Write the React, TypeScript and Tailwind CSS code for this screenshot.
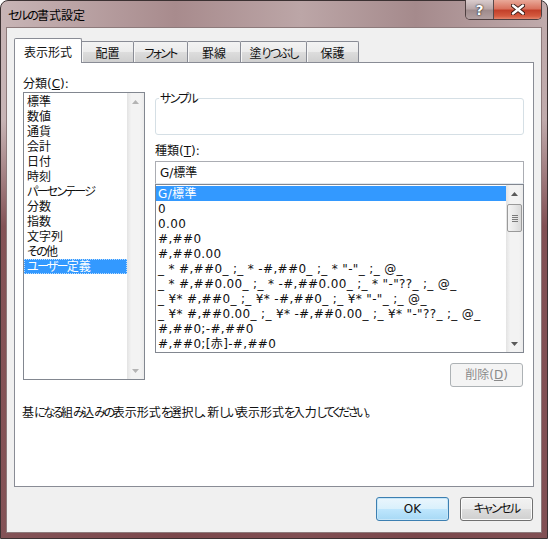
import React from "react";

function J({ t, tight }: { t: string; tight?: boolean }) {
  const parts = t.split(/([\u3040-\u30ff]+)/);
  return (
    <>
      {parts.map((p, i) =>
        /[\u3040-\u30ff]/.test(p) ? (
          <span key={i} className={tight ? "tracking-[-2.4px]" : "tracking-[-1.75px]"}>
            {p}
          </span>
        ) : (
          <React.Fragment key={i}>{p}</React.Fragment>
        )
      )}
    </>
  );
}

function Arrow({ dir, color }: { dir: "up" | "down"; color: string }) {
  return (
    <svg width="7" height="4" viewBox="0 0 7 4">
      {dir === "up" ? <path d="M0 4 L3.5 0 L7 4 Z" fill={color} /> : <path d="M0 0 L3.5 4 L7 0 Z" fill={color} />}
    </svg>
  );
}

function ScrollBar({ thumb }: { thumb?: boolean }) {
  const c = thumb ? "#5a5a5a" : "#b4b4b4";
  return (
    <div className="w-[17px] h-full flex flex-col bg-[linear-gradient(90deg,#e3e3e3,#f3f3f3_25%,#f3f3f3_75%,#ebebeb)]">
      <div className="h-[17px] flex items-center justify-center">
        <Arrow dir="up" color={c} />
      </div>
      <div className="flex-1">
        {thumb && (
          <div className="mx-[1px] mt-[2px] h-[28px] rounded-[2px] border border-[#9a9a9a] bg-[linear-gradient(90deg,#f4f4f4,#e8e8e8_50%,#d9d9d9)] flex flex-col items-center justify-center gap-[1px]">
            <div className="w-[6px] h-[1px] bg-[#7a7a7a]" />
            <div className="w-[6px] h-[1px] bg-[#7a7a7a]" />
            <div className="w-[6px] h-[1px] bg-[#7a7a7a]" />
            <div className="w-[6px] h-[1px] bg-[#7a7a7a]" />
          </div>
        )}
      </div>
      <div className="h-[17px] flex items-center justify-center">
        <Arrow dir="down" color={c} />
      </div>
    </div>
  );
}

const categories = [
  "標準",
  "数値",
  "通貨",
  "会計",
  "日付",
  "時刻",
  "パーセンテージ",
  "分数",
  "指数",
  "文字列",
  "その他",
  "ユーザー定義",
];

const formats = [
  "G/標準",
  "0",
  "0.00",
  "#,##0",
  "#,##0.00",
  '_ * #,##0_ ;_ * -#,##0_ ;_ * "-"_ ;_ @_',
  '_ * #,##0.00_ ;_ * -#,##0.00_ ;_ * "-"??_ ;_ @_',
  '_ ¥* #,##0_ ;_ ¥* -#,##0_ ;_ ¥* "-"_ ;_ @_',
  '_ ¥* #,##0.00_ ;_ ¥* -#,##0.00_ ;_ ¥* "-"??_ ;_ @_',
  "#,##0;-#,##0",
  "#,##0;[赤]-#,##0",
];

const tabs = [
  { label: "表示形式", w: "w-[68px]" },
  { label: "配置", w: "w-[52px]" },
  { label: "フォント", w: "w-[54px]" },
  { label: "罫線", w: "w-[53px]" },
  { label: "塗りつぶし", w: "w-[66px]" },
  { label: "保護", w: "w-[52px]" },
];

export default function App() {
  return (
    <div className="w-[548px] h-[539px] overflow-hidden bg-white [font-family:'DejaVu_Sans','Noto_Sans_CJK_JP',sans-serif] [font-feature-settings:'palt'] text-[12px] text-[#111]">
      <div className="w-[548px] h-[539px] rounded-t-[8px] border border-[#3b3132] flex flex-col [background:linear-gradient(180deg,rgba(0,0,0,0)_0%,rgba(0,0,0,0)_22%,rgba(105,45,50,0.72)_42%,rgba(105,45,50,0.72)_100%),linear-gradient(90deg,#c8b5b6_0%,#a88b8d_32%,#bca6a7_55%,#a58a8c_76%,#c0abac_100%)]">
        {/* Title bar */}
        <div className="h-[26px] flex items-start shrink-0">
          <div className="pl-[7px] pt-[7px] leading-[16px] text-[12px] text-black">
            <J t="セルの書式設定" />
          </div>
          <div className="ml-auto mr-[5px] -mt-[1px] flex h-[20px] rounded-b-[5px] border border-t-0 border-[#4e3f40] overflow-hidden">
            <div className="w-[28px] h-full border-r border-[#5a4a4b] bg-[linear-gradient(180deg,#d9cccd_0%,#b9a7a8_45%,#9f8b8c_55%,#b2a0a1_100%)] flex items-center justify-center">
              <span className="text-white font-bold text-[14px] leading-none [font-family:'DejaVu_Sans',sans-serif] [text-shadow:0_0_2px_#2b2b2b,0_0_1px_#000]">?</span>
            </div>
            <div className="w-[47px] h-full bg-[linear-gradient(180deg,#e9a999_0%,#d9735f_45%,#c3402a_55%,#d45a3f_85%,#e3856c_100%)] flex items-center justify-center">
              <svg width="14" height="11" viewBox="0 0 14 11">
                <path d="M2 1.5 L12 9.5 M12 1.5 L2 9.5" stroke="#3a1a14" strokeWidth="4.2" strokeLinecap="round" />
                <path d="M2 1.5 L12 9.5 M12 1.5 L2 9.5" stroke="#ffffff" strokeWidth="2.4" strokeLinecap="round" />
              </svg>
            </div>
          </div>
        </div>

        {/* Client area */}
        <div className="flex-1 mx-[5px] mb-[5px] border border-[#8d7a7b] bg-[#f0f0f0] flex flex-col">
          <div className="px-[7px] pt-[10px]">
            {/* Tabs */}
            <div className="h-[24px] flex items-end">
              {tabs.map((t, i) =>
                i === 0 ? (
                  <div
                    key={t.label}
                    className={`${t.w} h-[25px] -mb-px relative z-10 bg-white border border-b-0 border-[#898c95] rounded-t-[2px] flex items-start justify-center pt-[6px] leading-[16px]`}
                  >
                    <J t={t.label} />
                  </div>
                ) : (
                  <div
                    key={t.label}
                    className={`${t.w} h-[21px] border border-b-0 border-l-0 border-[#898c95] rounded-tr-[2px] bg-[linear-gradient(180deg,#f3f3f3_0%,#ebebeb_50%,#dddddd_51%,#cfcfcf_100%)] flex items-start justify-center pt-[4px] leading-[16px]`}
                  >
                    <div className="w-full text-center border-l border-[#f7f7f7] -ml-px">
                      <J t={t.label} />
                    </div>
                  </div>
                )
              )}
            </div>

            {/* Tab panel */}
            <div className="h-[425px] border border-[#898c95] bg-white flex flex-col">
              <div className="flex pl-[8px] pt-[11px]">
                {/* Left column */}
                <div className="w-[122px] flex flex-col">
                  <div className="h-[18px] pt-[2px] leading-[16px]">
                    分類(<span className="underline">C</span>):
                  </div>
                  <div className="h-[288px] border border-[#828790] flex bg-white">
                    <div className="flex-1 pt-[1px]">
                      {categories.map((c, i) => (
                        <div
                          key={c}
                          className={
                            i === categories.length - 1
                              ? "h-[15px] leading-[17px] px-[3px] bg-[#3399ff] text-white outline-1 outline-dotted outline-[#b9dcff] -outline-offset-1"
                              : "h-[15px] leading-[17px] px-[3px]"
                          }
                        >
                          <J t={c} />
                        </div>
                      ))}
                    </div>
                    <ScrollBar />
                  </div>
                </div>

                {/* Right column */}
                <div className="ml-[10px] w-[369px] flex flex-col">
                  <div className="mt-[24px] h-[37px] border border-[#d5dfe5] rounded-[3px] relative">
                    <div className="absolute -top-[8px] left-[3px] px-[1px] bg-white leading-[16px]">
                      <J t="サンプル" />
                    </div>
                  </div>
                  <div className="h-[26px] pt-[8px] leading-[16px]">
                    種類(<span className="underline">T</span>):
                  </div>
                  <div className="h-[23px] border border-[#abadb3] border-b-[#e3e9ef] pl-[4px] leading-[23px]">G/標準</div>
                  <div className="h-[169px] border border-[#828790] flex bg-white">
                    <div className="flex-1 pt-[1px] overflow-hidden">
                      {formats.map((f, i) => (
                        <div
                          key={f}
                          className={
                            i === 0
                              ? "h-[15px] leading-[17px] px-[2px] whitespace-pre tracking-[0.35px] bg-[#3399ff] text-white"
                              : "h-[15px] leading-[17px] px-[2px] whitespace-pre tracking-[0.35px]"
                          }
                        >
                          {f}
                        </div>
                      ))}
                    </div>
                    <ScrollBar thumb />
                  </div>
                  <div className="mt-[10px] self-end mr-[1px] w-[73px] h-[24px] rounded-[3px] border border-[#adb2b5] bg-[#f4f4f4] text-[#8a8a8a] flex items-center justify-center leading-[16px]">
                    削除(<span className="underline">D</span>)
                  </div>
                </div>
              </div>
              <div className="pl-[7px] mt-[18px] leading-[16px]">
                <J tight t="基になる組み込みの表示形式を選択し、新しい表示形式を入力してください。" />
              </div>
            </div>
          </div>

          {/* Buttons */}
          <div className="mt-[10px] pr-[8px] flex justify-end gap-[11px]">
            <div className="w-[73px] h-[24px] rounded-[3px] border border-[#3c7fb1] bg-[linear-gradient(180deg,#eaf6fd_0%,#d9f0fc_50%,#bee6fd_51%,#a7d9f5_100%)] shadow-[inset_0_0_0_1px_#c6e6f8] flex items-center justify-center leading-[16px]">
              OK
            </div>
            <div className="w-[73px] h-[24px] rounded-[3px] border border-[#707070] bg-[linear-gradient(180deg,#f2f2f2_0%,#ebebeb_50%,#dddddd_51%,#cfcfcf_100%)] shadow-[inset_0_0_0_1px_#fbfbfb] flex items-center justify-center leading-[16px]">
              <J t="キャンセル" />
            </div>
          </div>
        </div>
      </div>
    </div>
  );
}
